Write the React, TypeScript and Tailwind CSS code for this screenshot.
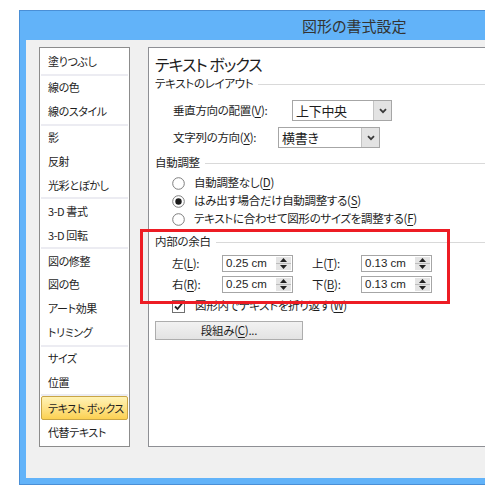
import React from "react";

const groups: string[][] = [
  ["塗りつぶし"],
  ["線の色", "線のスタイル"],
  ["影", "反射", "光彩とぼかし"],
  ["3-D 書式", "3-D 回転"],
  ["図の修整", "図の色", "アート効果", "トリミング"],
  ["サイズ", "位置"],
  ["テキスト ボックス", "代替テキスト"],
];

function List() {
  return (
    <div className="w-[91px] h-[400px] bg-white border border-[#8c8c8c] pt-[2px] flex flex-col shrink-0 text-[11px] tracking-[-0.4px]">
      {groups.map((g, gi) => (
        <React.Fragment key={gi}>
          {gi > 0 && <div className="h-[2px] mx-[1px] bg-[#ececf2]" />}
          {g.map((it) =>
            it === "テキスト ボックス" ? (
              <div key={it} className="h-[23.9px] mx-[1px] flex items-center pl-[6px] whitespace-nowrap rounded-[2px] border border-[#c9a546] bg-linear-to-b from-[#fff3b5] to-[#fcd150]">
                {it}
              </div>
            ) : (
              <div key={it} className="h-[23.9px] flex items-center pl-[8px] whitespace-nowrap">
                {it}
              </div>
            )
          )}
        </React.Fragment>
      ))}
    </div>
  );
}

function Section({ title }: { title: string }) {
  return (
    <div className="h-[14px] flex items-center">
      <span>{title}</span>
      <div className="flex-1 h-px bg-[#d9d9d9] ml-[5px]" />
    </div>
  );
}

function Chevron() {
  return (
    <svg width="8" height="6" viewBox="0 0 8 6">
      <path d="M1 1.2 L4 4.2 L7 1.2" fill="none" stroke="#3a3a3a" strokeWidth="1.8" />
    </svg>
  );
}

function Dropdown({ value, w }: { value: string; w: string }) {
  return (
    <div className={`${w} h-[21px] border border-[#a6a6a6] bg-white flex items-stretch`}>
      <div className="flex-1 flex items-center pl-[3px] text-[13px]">{value}</div>
      <div className="w-[18px] bg-[#e3e3e3] border-l border-[#c4c4c4] flex items-center justify-center">
        <Chevron />
      </div>
    </div>
  );
}

function Radio({ on }: { on?: boolean }) {
  return (
    <svg width="13" height="13" viewBox="0 0 13 13">
      <circle cx="6.5" cy="6.5" r="5.8" fill="#fff" stroke="#7d7d7d" strokeWidth="1" />
      {on && <circle cx="6.5" cy="6.5" r="3.2" fill="#1c1c1c" />}
    </svg>
  );
}

function Spinner({ value }: { value: string }) {
  return (
    <div className="w-[71px] h-[17px] border border-[#a6a6a6] bg-white flex items-stretch">
      <div className="flex-1 flex items-center pl-[3px] font-['Liberation_Sans',sans-serif] text-[11.5px] tracking-normal">{value}</div>
      <div className="w-[15px] my-[1px] mr-[1px] flex flex-col bg-[#e4e4e4]">
        <div className="flex-1 flex items-center justify-center border-b border-[#bdbdbd]">
          <svg width="7" height="4" viewBox="0 0 7 4"><path d="M0 4 L3.5 0 L7 4 Z" fill="#222" /></svg>
        </div>
        <div className="flex-1 flex items-center justify-center">
          <svg width="7" height="4" viewBox="0 0 7 4"><path d="M0 0 L3.5 4 L7 0 Z" fill="#222" /></svg>
        </div>
      </div>
    </div>
  );
}

function U({ c }: { c: string }) {
  return <span className="underline underline-offset-[2px]">{c}</span>;
}

function Panel() {
  return (
    <div className="w-[360px] h-[400px] ml-[18px] bg-white border border-[#8e8f94] pl-[6px] pt-[4px] flex flex-col shrink-0">
      <div className="h-[24px] flex items-center text-[16px] tracking-[-1px]">テキスト ボックス</div>
      <div className="mt-[1px]">
        <Section title="テキストのレイアウト" />
      </div>
      <div className="mt-[9px] h-[21px] flex items-center pl-[18px]">
        <span className="w-[119px]">垂直方向の配置(<U c="V" />):</span>
        <Dropdown value="上下中央" w="w-[100px]" />
      </div>
      <div className="mt-[6px] h-[21px] flex items-center pl-[18px]">
        <span className="w-[105px]">文字列の方向(<U c="X" />):</span>
        <Dropdown value="横書き" w="w-[102px]" />
      </div>
      <div className="mt-[8px]">
        <Section title="自動調整" />
      </div>
      <div className="mt-[4px] flex flex-col pl-[17px]">
        <div className="h-[18px] flex items-center gap-[9px]"><Radio /><span>自動調整なし(<U c="D" />)</span></div>
        <div className="h-[18px] flex items-center gap-[9px]"><Radio on /><span>はみ出す場合だけ自動調整する(<U c="S" />)</span></div>
        <div className="h-[18px] flex items-center gap-[9px]"><Radio /><span>テキストに合わせて図形のサイズを調整する(<U c="F" />)</span></div>
      </div>
      <div className="mt-[7px]">
        <Section title="内部の余白" />
      </div>
      <div className="mt-[6px] h-[17px] flex items-center pl-[17px]">
        <span className="w-[50px]">左(<U c="L" />):</span>
        <Spinner value="0.25 cm" />
        <span className="w-[49px] ml-[19px]">上(<U c="T" />):</span>
        <Spinner value="0.13 cm" />
      </div>
      <div className="mt-[4px] h-[17px] flex items-center pl-[17px]">
        <span className="w-[50px]">右(<U c="R" />):</span>
        <Spinner value="0.25 cm" />
        <span className="w-[49px] ml-[19px]">下(<U c="B" />):</span>
        <Spinner value="0.13 cm" />
      </div>
      <div className="mt-[6px] h-[14px] flex items-center pl-[17px] gap-[10px]">
        <svg width="13" height="13" viewBox="0 0 13 13">
          <rect x="0.5" y="0.5" width="12" height="12" fill="#fff" stroke="#707070" />
          <path d="M3 6.5 L5.5 9 L10 3.5" fill="none" stroke="#222" strokeWidth="1.8" />
        </svg>
        <span>図形内でテキストを折り返す(<U c="W" />)</span>
      </div>
      <div className="mt-[8px] w-[148px] h-[19px] border border-[#adadad] bg-linear-to-b from-[#f2f2f2] to-[#e3e3e3] flex items-center justify-center">
        段組み(<U c="C" />)...
      </div>
    </div>
  );
}

export default function App() {
  return (
    <div className="relative w-[485px] h-[500px] overflow-hidden bg-white font-['Noto_Sans_CJK_JP',sans-serif] text-[11.5px] tracking-[-0.3px] leading-none text-[#1e1e1e] [font-feature-settings:'palt']">
      <div className="ml-[19px] mt-[10px] w-[480px] h-[475px] border border-[#4a8fd6] bg-[#62b3f9] flex flex-col">
        <div className="h-[29px] flex items-center pl-[282px] text-[15px] tracking-normal text-[#333]">図形の書式設定</div>
        <div className="ml-[6px] h-[438px] bg-[#f0f0f0] flex pt-[7px] pl-[13px]">
          <List />
          <Panel />
        </div>
      </div>
      <div className="absolute left-[140px] top-[229px] w-[310px] h-[75px] border-[3px] border-[#ed1c24]" />
    </div>
  );
}
